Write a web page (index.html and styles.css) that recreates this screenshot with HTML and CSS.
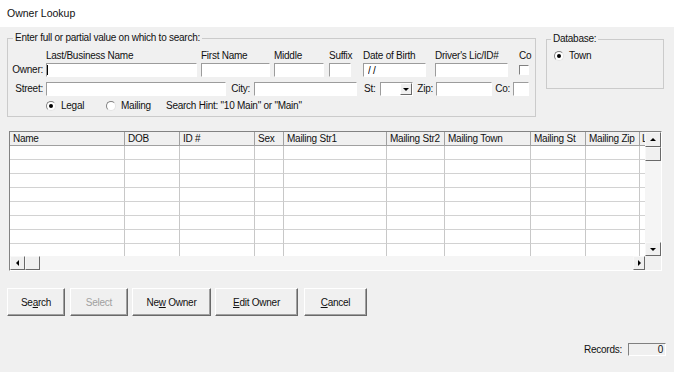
FILE: index.html
```html
<!DOCTYPE html>
<html lang="en">
<head>
    <meta charset="UTF-8">
    <title>Owner Lookup</title>
    <link rel="stylesheet" href="styles.css">
</head>
<body>
    <div class="title">Owner Lookup</div>

    <div class="top">
        <fieldset class="group search">
            <legend>Enter full or partial value on which to search:</legend>

            <div class="row owner-row">
                <label class="row-label">Owner:</label>
                <div class="field f-last"><span class="cap">Last/Business Name</span><input class="box" type="text"></div>
                <div class="field f-first"><span class="cap">First Name</span><input class="box" type="text"></div>
                <div class="field f-middle"><span class="cap">Middle</span><input class="box" type="text"></div>
                <div class="field f-suffix"><span class="cap">Suffix</span><input class="box" type="text"></div>
                <div class="field f-dob"><span class="cap">Date of Birth</span><input class="box dob" type="text" value="/ /"></div>
                <div class="field f-dl"><span class="cap">Driver's Lic/ID#</span><input class="box" type="text"></div>
                <div class="field f-co"><span class="cap">Co</span><span class="check"></span></div>
            </div>

            <div class="row street-row">
                <label class="row-label">Street:</label>
                <input class="box w-street" type="text">
                <label class="lbl lbl-city">City:</label>
                <input class="box w-city" type="text">
                <label class="lbl lbl-st">St:</label>
                <div class="combo"><span class="combo-btn"><i class="arrow down"></i></span></div>
                <label class="lbl lbl-zip">Zip:</label>
                <input class="box w-zip" type="text">
                <label class="lbl lbl-co">Co:</label>
                <input class="box w-co" type="text">
            </div>

            <div class="row radio-row">
                <span class="opt opt-legal"><span class="radio on"></span>Legal</span>
                <span class="opt opt-mailing"><span class="radio"></span>Mailing</span>
                <span class="hint">Search Hint: "10 Main" or "Main"</span>
            </div>
        </fieldset>

        <fieldset class="group database">
            <legend>Database:</legend>
            <span class="opt"><span class="radio on"></span>Town</span>
        </fieldset>
    </div>

    <div class="grid">
        <div class="table">
            <div class="trow head">
                <span>Name</span><span>DOB</span><span>ID #</span><span>Sex</span><span>Mailing Str1</span><span>Mailing Str2</span><span>Mailing Town</span><span>Mailing St</span><span>Mailing Zip</span><span>L</span>
            </div>
            <div class="trow"><span></span><span></span><span></span><span></span><span></span><span></span><span></span><span></span><span></span><span></span></div>
            <div class="trow"><span></span><span></span><span></span><span></span><span></span><span></span><span></span><span></span><span></span><span></span></div>
            <div class="trow"><span></span><span></span><span></span><span></span><span></span><span></span><span></span><span></span><span></span><span></span></div>
            <div class="trow"><span></span><span></span><span></span><span></span><span></span><span></span><span></span><span></span><span></span><span></span></div>
            <div class="trow"><span></span><span></span><span></span><span></span><span></span><span></span><span></span><span></span><span></span><span></span></div>
            <div class="trow"><span></span><span></span><span></span><span></span><span></span><span></span><span></span><span></span><span></span><span></span></div>
            <div class="trow"><span></span><span></span><span></span><span></span><span></span><span></span><span></span><span></span><span></span><span></span></div>
            <div class="trow"><span></span><span></span><span></span><span></span><span></span><span></span><span></span><span></span><span></span><span></span></div>
        </div>
        <div class="vscroll">
            <span class="sb-btn up-btn"><i class="arrow up"></i></span>
            <span class="thumb"></span>
            <span class="track"></span>
            <span class="sb-btn down-btn"><i class="arrow down"></i></span>
        </div>
        <div class="hscroll">
            <span class="sb-btn left-btn"><i class="arrow left"></i></span>
            <span class="thumb"></span>
            <span class="track"></span>
            <span class="sb-btn right-btn"><i class="arrow right"></i></span>
        </div>
        <div class="corner"></div>
    </div>

    <div class="buttons">
        <button class="btn b-search">Se<u>a</u>rch</button>
        <button class="btn b-select" disabled>Select</button>
        <button class="btn b-new">Ne<u>w</u> Owner</button>
        <button class="btn b-edit"><u>E</u>dit Owner</button>
        <button class="btn b-cancel"><u>C</u>ancel</button>
    </div>

    <div class="records">
        <span>Records:</span>
        <span class="records-box">0</span>
    </div>
</body>
</html>
```

FILE: styles.css
```css
body {
    margin: 0;
    background-color: #f0f0f0;
    font-family: "Liberation Sans", Arial, sans-serif;
    font-size: 10px;
    letter-spacing: -0.25px;
    color: #111;
}
.title {
    height: 27px;
    line-height: 27px;
    padding-left: 7px;
    background-color: #fff;
    font-size: 10.5px;
    letter-spacing: 0;
}

/* group boxes */
.top {
    display: flex;
    align-items: flex-start;
}
.group {
    box-sizing: border-box;
    min-width: 0;
    margin: 0;
    padding: 0;
    border: 1px solid #cbcbcb;
}
.group legend {
    padding: 0 2px;
    line-height: 12px;
}
.search {
    width: 529px;
    margin: 5px 0 0 7px;
    padding-bottom: 4px;
}
.search legend {
    margin-left: 5px;
}
.database {
    width: 118px;
    margin: 6px 0 0 10px;
    padding: 5px 0 26px 0;
}
.database legend {
    margin-left: 4px;
}
.database .opt {
    margin-left: 7px;
    line-height: 12px;
}

/* form rows */
.row {
    display: flex;
    align-items: flex-end;
}
.owner-row {
    margin-top: 6px;
}
.street-row {
    margin-top: 5px;
}
.radio-row {
    margin-top: 4px;
    padding-left: 38px;
    line-height: 12px;
    align-items: center;
}
.row-label {
    flex: none;
    width: 35px;
    margin-right: 3px;
    text-align: right;
    line-height: 14px;
}
.field {
    display: flex;
    flex-direction: column;
    flex: none;
}
.cap {
    line-height: 12px;
    margin-bottom: 1px;
    white-space: nowrap;
}
.box {
    box-sizing: border-box;
    flex: none;
    height: 14px;
    margin: 0;
    padding: 0 2px;
    border: 1px solid;
    border-color: #9c9c9c #fff #fff #9c9c9c;
    background-color: #fff;
    font: inherit;
    letter-spacing: inherit;
    color: #000;
    outline: none;
}
.field .box {
    width: 100%;
}
.dob {
    padding-left: 4px;
}
.f-last {
    width: 151px;
    margin-right: 4px;
    position: relative;
}
.f-last::after {
    content: "";
    position: absolute;
    left: 1px;
    bottom: 2px;
    width: 1px;
    height: 10px;
    background-color: #000;
}
.f-first {
    width: 69px;
    margin-right: 4px;
}
.f-middle {
    width: 50px;
    margin-right: 5px;
}
.f-suffix {
    width: 22px;
    margin-right: 12px;
}
.f-dob {
    width: 63px;
    margin-right: 9px;
}
.f-dl {
    width: 73px;
    margin-right: 11px;
}
.f-co {
    width: 15px;
}
.check {
    box-sizing: border-box;
    width: 10px;
    height: 10px;
    margin: 2px 0;
    border: 1px solid;
    border-color: #808080 #fff #fff #808080;
    background-color: #fff;
}

.lbl {
    flex: none;
    box-sizing: border-box;
    line-height: 14px;
}
.w-street {
    width: 180px;
}
.lbl-city {
    width: 28px;
    padding-right: 4px;
    text-align: right;
}
.w-city {
    width: 103px;
}
.lbl-st {
    width: 23px;
    padding-left: 7px;
}
.combo {
    box-sizing: border-box;
    flex: none;
    display: flex;
    justify-content: flex-end;
    width: 33px;
    height: 14px;
    border: 1px solid;
    border-color: #9c9c9c #fff #fff #9c9c9c;
    background-color: #fff;
}
.combo-btn {
    box-sizing: border-box;
    display: flex;
    align-items: center;
    justify-content: center;
    width: 12px;
    height: 12px;
    border: 1px solid;
    border-color: #fff #696969 #696969 #fff;
    background-color: #f0f0f0;
}
.lbl-zip {
    width: 23px;
    padding-right: 3px;
    text-align: right;
}
.w-zip {
    width: 56px;
}
.lbl-co {
    width: 21px;
    padding-right: 3px;
    text-align: right;
}
.w-co {
    width: 16px;
}

/* radios */
.opt {
    display: flex;
    align-items: center;
    flex: none;
}
.opt-legal,
.opt-mailing {
    width: 60px;
}
.radio {
    position: relative;
    flex: none;
    box-sizing: border-box;
    width: 10px;
    height: 10px;
    margin-right: 5px;
    border: 1px solid;
    border-color: #808080 #e4e4e4 #e4e4e4 #808080;
    border-radius: 50%;
    background-color: #fff;
}
.radio.on::after {
    content: "";
    position: absolute;
    left: 2px;
    top: 2px;
    width: 4px;
    height: 4px;
    border-radius: 50%;
    background-color: #000;
}

/* arrows */
.arrow {
    width: 0;
    height: 0;
    border: 3px solid transparent;
}
.arrow.down {
    border-top-color: #000;
    border-bottom-width: 0;
}
.arrow.up {
    border-bottom-color: #000;
    border-top-width: 0;
}
.arrow.left {
    border-right-color: #000;
    border-left-width: 0;
}
.arrow.right {
    border-left-color: #000;
    border-right-width: 0;
}

/* results grid */
.grid {
    display: grid;
    grid-template-columns: 635px 16px;
    grid-template-rows: 124px 14px;
    box-sizing: border-box;
    width: 653px;
    height: 140px;
    margin: 14px 0 0 9px;
    border: 1px solid;
    border-color: #828282 #fff #fff #828282;
}
.table {
    overflow: hidden;
    background-color: #fff;
}
.trow {
    display: grid;
    grid-template-columns: 115px 55px 75px 29px 103px 58px 86px 55px 54px 40px;
    height: 14px;
}
.trow span {
    box-sizing: border-box;
    border-right: 1px solid #c8c8c8;
    border-bottom: 1px solid #d2d2d2;
}
.head span {
    padding-left: 3px;
    line-height: 13px;
    white-space: nowrap;
    overflow: hidden;
    background-color: #f0f0f0;
    border-right-color: #a0a0a0;
    border-bottom-color: #a0a0a0;
}
.head span:last-child {
    padding-left: 2px;
}
.vscroll,
.hscroll {
    display: flex;
    background-color: #f5f5f5;
}
.vscroll {
    flex-direction: column;
}
.sb-btn,
.thumb {
    box-sizing: border-box;
    flex: none;
    display: flex;
    align-items: center;
    justify-content: center;
    background-color: #f0f0f0;
    border: 1px solid;
    border-color: #f8f8f8 #696969 #696969 #f8f8f8;
}
.track {
    flex: 1;
}
.up-btn {
    height: 15px;
}
.vscroll .thumb {
    height: 14px;
}
.down-btn {
    height: 14px;
}
.left-btn {
    width: 15px;
}
.hscroll .thumb {
    width: 15px;
}
.right-btn {
    width: 12px;
}
.corner {
    background-color: #f0f0f0;
}

/* buttons */
.buttons {
    display: flex;
    margin: 17px 0 0 7px;
}
.btn {
    box-sizing: border-box;
    flex: none;
    height: 28px;
    margin: 0;
    padding: 0;
    border: 1px solid;
    border-color: #fff #696969 #696969 #fff;
    box-shadow: inset -1px -1px #a0a0a0;
    background-color: #f0f0f0;
    font: inherit;
    letter-spacing: inherit;
    color: #111;
}
.btn:disabled {
    color: #a0a0a0;
}
.b-search {
    width: 58px;
}
.b-select {
    width: 58px;
    margin-left: 5px;
}
.b-new {
    width: 79px;
    margin-left: 4px;
}
.b-edit {
    width: 83px;
    margin-left: 4px;
}
.b-cancel {
    width: 63px;
    margin-left: 6px;
}

/* footer */
.records {
    display: flex;
    justify-content: flex-end;
    align-items: center;
    margin-top: 27px;
    padding-right: 8px;
}
.records-box {
    box-sizing: border-box;
    width: 38px;
    height: 13px;
    margin-left: 6px;
    padding-right: 2px;
    border: 1px solid;
    border-color: #808080 #fff #fff #808080;
    line-height: 11px;
    text-align: right;
}
```
